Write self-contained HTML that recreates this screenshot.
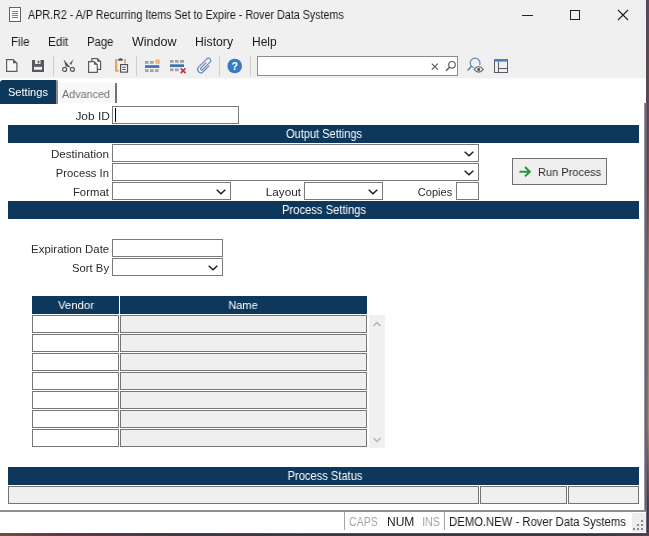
<!DOCTYPE html>
<html lang="en">
<head>
<meta charset="utf-8">
<title>APR.R2 - A/P Recurring Items Set to Expire - Rover Data Systems</title>
<style>
*{box-sizing:border-box;margin:0;padding:0}
html,body{width:649px;height:536px;overflow:hidden;background:#5c4960}
body{font-family:"Liberation Sans","DejaVu Sans",sans-serif;font-size:11px;color:#1a1a1a;position:relative}
.abs{position:absolute}
#desk{position:absolute;left:0;top:0;width:649px;height:536px;background:linear-gradient(90deg,#874a35 0px,#6e3f45 110px,#5b4560 300px,#554a6b 520px,#5d4a62 649px)}
#win{position:absolute;left:0;top:0;width:646px;height:533px;overflow:hidden}
#wbg{position:absolute;left:0;top:0;width:646px;height:533px;background:#fff}
#chrome{position:absolute;left:0;top:0;width:646px;height:78px;background:#f0f0f0}
.t{position:absolute;white-space:nowrap;will-change:transform}
.bar{position:absolute;left:8px;width:631px;height:18px;background:#0d385c}
.inp{position:absolute;background:#fff;border:1px solid #7b7b7b}
.cell{position:absolute;height:18px;border:1px solid #767676}
.v{left:32px;width:87px;background:#fff}
.n{left:120px;width:247px;background:#efefef}
.st{position:absolute;top:486px;height:18px;background:#efefef;border:1px solid #747474}
.sep{position:absolute;width:1px;background:#cfcfcf}
svg{position:absolute;overflow:visible}
</style>
</head>
<body>
<div id="desk"></div>
<div class="abs" style="left:0;top:533px;width:649px;height:1px;background:linear-gradient(90deg,#5a5a70 0,#4a5060 60px,#4a4858 150px,#55566a 300px,#55566a 600px,#4a4656 649px)"></div>
<div class="abs" style="left:0;top:534px;width:649px;height:1px;background:linear-gradient(90deg,#6b4540 0,#5a2f3a 60px,#40303a 150px,#30303e 300px,#30303e 600px,#4a3a48 649px)"></div>
<div class="abs" style="left:0;top:535px;width:649px;height:1px;background:linear-gradient(90deg,#864a38 0,#703848 60px,#4a3e4a 150px,#3d3a48 300px,#3d3a48 600px,#5a4050 649px)"></div>
<div class="abs" style="left:646px;top:0;width:1px;height:533px;background:linear-gradient(180deg,#50525f 0,#50525f 103px,#6b6577 103px,#6b6577 480px,#666a78 533px)"></div>
<div class="abs" style="left:647px;top:0;width:1px;height:533px;background:linear-gradient(180deg,#4f485b 0,#584050 120px,#5c4058 185px,#7c6880 300px,#857478 425px,#3a3848 505px,#3a3848 533px)"></div>
<div class="abs" style="left:648px;top:0;width:1px;height:533px;background:linear-gradient(180deg,#5a4a62 0,#644850 120px,#804840 185px,#a08468 300px,#a89068 425px,#48404c 505px,#48404c 533px)"></div>
<div id="wbg"></div>
<div class="abs" style="left:644px;top:103px;width:1px;height:430px;background:#999aa0"></div>
<div class="abs" style="left:645px;top:103px;width:1px;height:430px;background:#63646c"></div>
<div id="win">
<div id="chrome"></div>
<div class="abs" style="left:0;top:78px;width:646px;height:1px;background:#f8f8f8"></div>
<!-- title bar -->
<svg style="left:9px;top:7px" width="12" height="15" viewBox="0 0 12 15"><rect x="0.500" y="0.500" width="11" height="14" fill="#fbfbfb" stroke="#636363" stroke-width="1"/><path d="M3 4.500h6M3 6.500h6M3 8.500h6M3 10.500h6" stroke="#7d7d7d" stroke-width="1"/></svg>
<svg style="left:522px;top:9px" width="110" height="12" viewBox="0 0 110 12"><path d="M0 6.500h11" stroke="#222" stroke-width="1"/><rect x="48.500" y="1.500" width="9" height="9" fill="none" stroke="#222" stroke-width="1"/><path d="M96 1l10 10M106 1l-10 10" stroke="#222" stroke-width="1.100"/></svg>

<!-- toolbar: new -->
<svg style="left:6px;top:59px" width="12" height="13" viewBox="0 0 12 13"><path d="M0.600 0.600H7L10.900 4.300V12.400H0.600Z" fill="#f7f7f7" stroke="#5c5c5c" stroke-width="1.200"/><path d="M7 0.600V4.300H10.900Z" fill="#5c5c5c"/></svg>
<!-- save -->
<svg style="left:32px;top:60px" width="12" height="12" viewBox="0 0 12 12"><path d="M0 0H12V12H0Z" fill="#585860"/><rect x="3" y="0" width="5.500" height="4" fill="#e9e9e9"/><rect x="5.800" y="0.800" width="1.500" height="2.500" fill="#585860"/><rect x="2" y="6.800" width="8" height="3" fill="#e9e9e9"/><rect x="3" y="8" width="6" height="0.800" fill="#fff"/></svg>
<div class="sep" style="left:53px;top:56px;height:20px"></div>
<!-- cut -->
<svg style="left:62px;top:59px" width="14" height="13" viewBox="0 0 14 13"><path d="M1.600 0.300L3.600 7.300L8.800 8.800Z" fill="#595959"/><path d="M11.500 0.300L7.500 4.500L9.200 6Z" fill="#595959"/><circle cx="2.600" cy="10.400" r="2" fill="none" stroke="#595959" stroke-width="1.200"/><circle cx="10.400" cy="10.400" r="2" fill="none" stroke="#595959" stroke-width="1.200"/></svg>
<!-- copy -->
<svg style="left:88px;top:58px" width="14" height="15" viewBox="0 0 14 15"><path d="M3.900 0.600H9.300L12.600 3.800V11.300H3.900Z" fill="#f7f7f7" stroke="#5c5c5c" stroke-width="1.200"/><path d="M9.300 0.600V3.800H12.600Z" fill="#5c5c5c"/><path d="M0.600 3.600H6L9.300 6.800V14.300H0.600Z" fill="#f7f7f7" stroke="#5c5c5c" stroke-width="1.200"/><path d="M6 3.600V6.800H9.300Z" fill="#5c5c5c"/></svg>
<!-- paste -->
<svg style="left:114px;top:57px" width="15" height="17" viewBox="0 0 15 17"><path d="M1 1.900H3.300V13H4.800V14.800H1Z" fill="#e3a55f"/><path d="M10.200 1.900H11.900V6.500H10.200Z" fill="#dba26a"/><path d="M4.100 2.400Q6.500 -0.600 8.900 2.400V3.800H4.100Z" fill="#53535c"/><rect x="6.600" y="7.600" width="6.900" height="7.500" fill="#fff" stroke="#53535c" stroke-width="1.200"/><path d="M8.100 10.300h3.800M8.100 12.400h3.800" stroke="#53535c" stroke-width="1"/></svg>
<div class="sep" style="left:136px;top:56px;height:20px"></div>
<!-- insert row -->
<svg style="left:145px;top:58px" width="16" height="15" viewBox="0 0 16 15"><rect x="0" y="3" width="3.600" height="2.800" fill="#a3a3a3"/><rect x="5" y="3" width="3.600" height="2.800" fill="#a3a3a3"/><rect x="10.600" y="1.700" width="4" height="4" fill="#eba352"/><path d="M12.600 0.500v6.400M9.600 3.700h6" stroke="#f3cfa4" stroke-width="0.700"/><rect x="0" y="7.200" width="14.300" height="2.700" fill="#3d70b2"/><rect x="0" y="11.200" width="3.600" height="2.800" fill="#a3a3a3"/><rect x="5" y="11.200" width="3.600" height="2.800" fill="#a3a3a3"/><rect x="10" y="11.200" width="3.600" height="2.800" fill="#a3a3a3"/></svg>
<!-- delete row -->
<svg style="left:170px;top:59px" width="17" height="16" viewBox="0 0 17 16"><rect x="0" y="1" width="3.600" height="2.800" fill="#a3a3a3"/><rect x="5" y="1" width="3.600" height="2.800" fill="#a3a3a3"/><rect x="10" y="1" width="4" height="2.800" fill="#a3a3a3"/><rect x="0" y="5.300" width="14" height="2.700" fill="#3d70b2"/><rect x="0" y="9.400" width="3.600" height="2.800" fill="#a3a3a3"/><rect x="5" y="9.400" width="3.600" height="2.800" fill="#a3a3a3"/><path d="M10.700 9.300L15.500 14.100M15.500 9.300L10.700 14.100" stroke="#c22c40" stroke-width="1.600"/></svg>
<!-- paperclip -->
<svg style="left:196px;top:57px" width="17" height="18" viewBox="0 0 17 18"><g transform="translate(8.500 8.800) rotate(45)"><path d="M3.200 -3.500V5.200A3.200 3.200 0 0 1 -3.200 5.200V-6.500A2.250 2.250 0 0 1 1.300 -6.500V4A1.150 1.150 0 0 1 -1 4V-3.500" fill="none" stroke="#6288bd" stroke-width="1.150"/></g></svg>
<div class="sep" style="left:219px;top:56px;height:20px"></div>
<!-- help -->
<svg style="left:227px;top:58px" width="16" height="16" viewBox="0 0 16 16"><circle cx="7.700" cy="8" r="7.300" fill="#3b79c3"/><text x="7.700" y="11.800" font-family="Liberation Sans, sans-serif" font-weight="bold" font-size="10.500" fill="#fff" text-anchor="middle">?</text></svg>
<div class="sep" style="left:250px;top:56px;height:20px"></div>
<!-- search box -->
<div class="abs" style="left:257px;top:56px;width:201px;height:20px;background:#fff;border:1px solid #8c8c8c"></div>
<svg style="left:431px;top:63px" width="8" height="8" viewBox="0 0 8 8"><path d="M0.800 0.600L6.800 6.600M6.800 0.600L0.800 6.600" stroke="#555" stroke-width="1.100"/></svg>
<svg style="left:445px;top:60px" width="12" height="12" viewBox="0 0 12 12"><circle cx="7" cy="4.800" r="3.300" fill="none" stroke="#555" stroke-width="1.100"/><path d="M4.600 7.300L1 10.800" stroke="#555" stroke-width="1.400"/></svg>
<!-- search-eye -->
<svg style="left:466px;top:56px" width="18" height="18" viewBox="0 0 18 18"><circle cx="9.100" cy="7" r="4.900" fill="none" stroke="#5a84b8" stroke-width="1.150"/><path d="M5.500 10.300L1.600 14.500" stroke="#5a84b8" stroke-width="1.600"/><path d="M8.100 13.300Q12.700 7.600 17.300 13.300Q12.700 19 8.100 13.300Z" fill="#f0f0f0" stroke="#f0f0f0" stroke-width="3.200"/><path d="M8.100 13.300Q12.700 7.600 17.300 13.300Q12.700 19 8.100 13.300Z" fill="#f4f4f4" stroke="#666668" stroke-width="1.100"/><circle cx="12.700" cy="13.400" r="1.550" fill="#5c5c60"/></svg>
<!-- layout -->
<svg style="left:494px;top:59px" width="15" height="14" viewBox="0 0 15 14"><rect x="0.500" y="0.500" width="13" height="13" fill="none" stroke="#5a5a62" stroke-width="1"/><rect x="0" y="0" width="14" height="2.600" fill="#4a80bc"/><path d="M4.500 2.600V13.500M4.500 9.500H13.500" stroke="#5a5a62" stroke-width="1"/></svg>

<!-- tabs -->
<div class="abs" style="left:0;top:80px;width:58px;height:24px;background:#0d385c;border-right:2px solid #8b8b8b;border-top-left-radius:3px;border-top-right-radius:2px"></div>
<div class="abs" style="left:59px;top:83px;width:58px;height:20px;background:#f8f8f8;border-right:2px solid #747474"></div>

<!-- job id -->
<div class="inp" style="left:112px;top:106px;width:127px;height:18px"></div>
<div class="abs" style="left:115px;top:108px;width:1px;height:14px;background:#000"></div>

<div class="bar" style="top:125px"></div>
<div class="inp" style="left:112px;top:144px;width:367px;height:18px"></div><svg style="left:463.5px;top:150.5px" width="10" height="6" viewBox="0 0 10 6"><path d="M0.7 0.7L5 4.700L9.300 0.7" fill="none" stroke="#1a1a1a" stroke-width="1.4"/></svg>
<div class="inp" style="left:112px;top:163px;width:367px;height:18px"></div><svg style="left:463.5px;top:169.5px" width="10" height="6" viewBox="0 0 10 6"><path d="M0.7 0.7L5 4.700L9.300 0.7" fill="none" stroke="#1a1a1a" stroke-width="1.4"/></svg>
<div class="inp" style="left:112px;top:182px;width:119px;height:18px"></div><svg style="left:215.5px;top:188.5px" width="10" height="6" viewBox="0 0 10 6"><path d="M0.7 0.7L5 4.700L9.300 0.7" fill="none" stroke="#1a1a1a" stroke-width="1.4"/></svg>
<div class="inp" style="left:304px;top:182px;width:79px;height:18px"></div><svg style="left:367.5px;top:188.5px" width="10" height="6" viewBox="0 0 10 6"><path d="M0.7 0.7L5 4.700L9.300 0.7" fill="none" stroke="#1a1a1a" stroke-width="1.4"/></svg>
<div class="inp" style="left:456px;top:182px;width:23px;height:18px"></div>

<!-- run process -->
<div class="abs" style="left:512px;top:158px;width:95px;height:27px;background:#efefef;border:1px solid #6f6f6f"></div>
<svg style="left:519px;top:165.600px" width="13" height="12" viewBox="0 0 13 12"><path d="M0.5 5.700H10.500M6 1L10.800 5.700L6 10.400" fill="none" stroke="#1c9c3a" stroke-width="2"/></svg>

<div class="bar" style="top:201px"></div>
<div class="inp" style="left:112px;top:239px;width:111px;height:18px"></div>
<div class="inp" style="left:112px;top:258px;width:111px;height:18px"></div><svg style="left:207.5px;top:264.5px" width="10" height="6" viewBox="0 0 10 6"><path d="M0.7 0.7L5 4.700L9.300 0.7" fill="none" stroke="#1a1a1a" stroke-width="1.4"/></svg>

<!-- grid -->
<div class="abs" style="left:32px;top:296px;width:87px;height:18px;background:#0d385c"></div>
<div class="abs" style="left:120px;top:296px;width:247px;height:18px;background:#0d385c"></div>
<div class="abs" style="left:369px;top:315px;width:16px;height:133px;background:#f0f0f0"></div>
<svg style="left:373px;top:321px" width="8" height="6" viewBox="0 0 8 6"><path d="M0.500 5L4 1.500L7.500 5" fill="none" stroke="#b4b4b4" stroke-width="1.500"/></svg>
<svg style="left:373px;top:436.500px" width="8" height="6" viewBox="0 0 8 6"><path d="M0.500 1L4 4.500L7.500 1" fill="none" stroke="#b4b4b4" stroke-width="1.500"/></svg>
<div class="cell v" style="top:315px"></div><div class="cell n" style="top:315px"></div>
<div class="cell v" style="top:334px"></div><div class="cell n" style="top:334px"></div>
<div class="cell v" style="top:353px"></div><div class="cell n" style="top:353px"></div>
<div class="cell v" style="top:372px"></div><div class="cell n" style="top:372px"></div>
<div class="cell v" style="top:391px"></div><div class="cell n" style="top:391px"></div>
<div class="cell v" style="top:410px"></div><div class="cell n" style="top:410px"></div>
<div class="cell v" style="top:429px"></div><div class="cell n" style="top:429px"></div>

<div class="bar" style="top:467px"></div>
<div class="st" style="left:8px;width:471px"></div>
<div class="st" style="left:480px;width:87px"></div>
<div class="st" style="left:568px;width:71px"></div>

<!-- status bar -->
<div class="abs" style="left:0;top:510px;width:646px;height:23px;background:#fff"></div>
<div class="abs" style="left:0;top:510px;width:646px;height:2px;background:#8d8d8d"></div>
<div class="abs" style="left:344px;top:512px;width:1px;height:18px;background:#a5a5a5"></div>
<div class="abs" style="left:444px;top:512px;width:1px;height:18px;background:#a5a5a5"></div>
<div class="abs" style="left:632px;top:513px;width:14px;height:19px;background:#ececec"></div>
<svg style="left:633px;top:520px" width="11" height="11" viewBox="0 0 11 11"><path d="M8 0h2v2h-2zM4 4h2v2h-2zM8 4h2v2h-2zM0 8h2v2h-2zM4 8h2v2h-2zM8 8h2v2h-2z" fill="#8a8a8a"/></svg>

<div class="t" id="title" style="left:28px;transform-origin:0 50%;top:8.54px;font-size:12px;line-height:12px;color:#1b1b1b;transform:scaleX(0.8940)">APR.R2 - A/P Recurring Items Set to Expire - Rover Data Systems</div>
<div class="t" id="m1" style="left:11.2px;transform-origin:0 50%;top:35.84px;font-size:12px;line-height:12px;color:#1b1b1b;transform:scaleX(0.9564)">File</div>
<div class="t" id="m2" style="left:47.6px;transform-origin:0 50%;top:35.84px;font-size:12px;line-height:12px;color:#1b1b1b;transform:scaleX(0.9764)">Edit</div>
<div class="t" id="m3" style="left:87.1px;transform-origin:0 50%;top:35.84px;font-size:12px;line-height:12px;color:#1b1b1b;transform:scaleX(0.9418)">Page</div>
<div class="t" id="m4" style="left:132.2px;transform-origin:0 50%;top:35.84px;font-size:12px;line-height:12px;color:#1b1b1b;transform:scaleX(1.0448)">Window</div>
<div class="t" id="m5" style="left:195.4px;transform-origin:0 50%;top:35.84px;font-size:12px;line-height:12px;color:#1b1b1b;transform:scaleX(1.0176)">History</div>
<div class="t" id="m6" style="left:252.0px;transform-origin:0 50%;top:35.84px;font-size:12px;line-height:12px;color:#1b1b1b;transform:scaleX(0.9924)">Help</div>
<div class="t" id="tab1" style="left:8.4px;transform-origin:0 50%;top:87.49px;font-size:11px;line-height:11px;color:#ffffff;transform:scaleX(1.0038)">Settings</div>
<div class="t" id="tab2" style="left:61.8px;transform-origin:0 50%;top:89.29px;font-size:11px;line-height:11px;color:#737373;transform:scaleX(0.9808)">Advanced</div>
<div class="t" id="l_job" style="right:536px;transform-origin:100% 50%;top:110.89px;font-size:11px;line-height:11px;color:#2b2b2b;transform:scaleX(1.0819)">Job ID</div>
<div class="t" id="b1" style="left:174px;width:300px;text-align:center;transform-origin:50% 50%;top:128.04px;font-size:12px;line-height:12px;color:#ffffff;transform:scaleX(0.9200)">Output Settings</div>
<div class="t" id="l_dest" style="right:537.1px;transform-origin:100% 50%;top:149.09px;font-size:11px;line-height:11px;color:#2b2b2b;transform:scaleX(1.0555)">Destination</div>
<div class="t" id="l_proc" style="right:537.0px;transform-origin:100% 50%;top:167.89px;font-size:11px;line-height:11px;color:#2b2b2b;transform:scaleX(1.0218)">Process In</div>
<div class="t" id="l_fmt" style="right:537.0px;transform-origin:100% 50%;top:186.99px;font-size:11px;line-height:11px;color:#2b2b2b;transform:scaleX(1.0303)">Format</div>
<div class="t" id="l_lay" style="right:344.8px;transform-origin:100% 50%;top:186.99px;font-size:11px;line-height:11px;color:#2b2b2b;transform:scaleX(1.0687)">Layout</div>
<div class="t" id="l_cop" style="right:193.60000000000002px;transform-origin:100% 50%;top:186.99px;font-size:11px;line-height:11px;color:#2b2b2b;transform:scaleX(1.0044)">Copies</div>
<div class="t" id="run" style="left:537.6px;transform-origin:0 50%;top:166.77px;font-size:11.5px;line-height:11.5px;color:#2b2b2b;transform:scaleX(0.9598)">Run Process</div>
<div class="t" id="b2" style="left:174.2px;width:300px;text-align:center;transform-origin:50% 50%;top:204.04px;font-size:12px;line-height:12px;color:#ffffff;transform:scaleX(0.9340)">Process Settings</div>
<div class="t" id="l_exp" style="right:536.8px;transform-origin:100% 50%;top:243.99px;font-size:11px;line-height:11px;color:#2b2b2b;transform:scaleX(1.0383)">Expiration Date</div>
<div class="t" id="l_sort" style="right:537.4px;transform-origin:100% 50%;top:262.89px;font-size:11px;line-height:11px;color:#2b2b2b;transform:scaleX(1.0283)">Sort By</div>
<div class="t" id="h_v" style="left:-74.2px;width:300px;text-align:center;transform-origin:50% 50%;top:299.97px;font-size:11.5px;line-height:11.5px;color:#ffffff;transform:scaleX(0.9821)">Vendor</div>
<div class="t" id="h_n" style="left:93.4px;width:300px;text-align:center;transform-origin:50% 50%;top:299.97px;font-size:11.5px;line-height:11.5px;color:#ffffff;transform:scaleX(0.9580)">Name</div>
<div class="t" id="b3" style="left:174.5px;width:300px;text-align:center;transform-origin:50% 50%;top:470.04px;font-size:12px;line-height:12px;color:#ffffff;transform:scaleX(0.9293)">Process Status</div>
<div class="t" id="s1" style="left:349.2px;transform-origin:0 50%;top:515.64px;font-size:12px;line-height:12px;color:#a3a3a3;transform:scaleX(0.8780)">CAPS</div>
<div class="t" id="s2" style="left:387.2px;transform-origin:0 50%;top:515.64px;font-size:12px;line-height:12px;color:#1b1b1b;transform:scaleX(0.9990)">NUM</div>
<div class="t" id="s3" style="left:421.8px;transform-origin:0 50%;top:515.64px;font-size:12px;line-height:12px;color:#a3a3a3;transform:scaleX(0.8993)">INS</div>
<div class="t" id="s4" style="left:449.0px;transform-origin:0 50%;top:515.64px;font-size:12px;line-height:12px;color:#1b1b1b;transform:scaleX(0.9408)">DEMO.NEW - Rover Data Systems</div>
</div>
</body>
</html>
